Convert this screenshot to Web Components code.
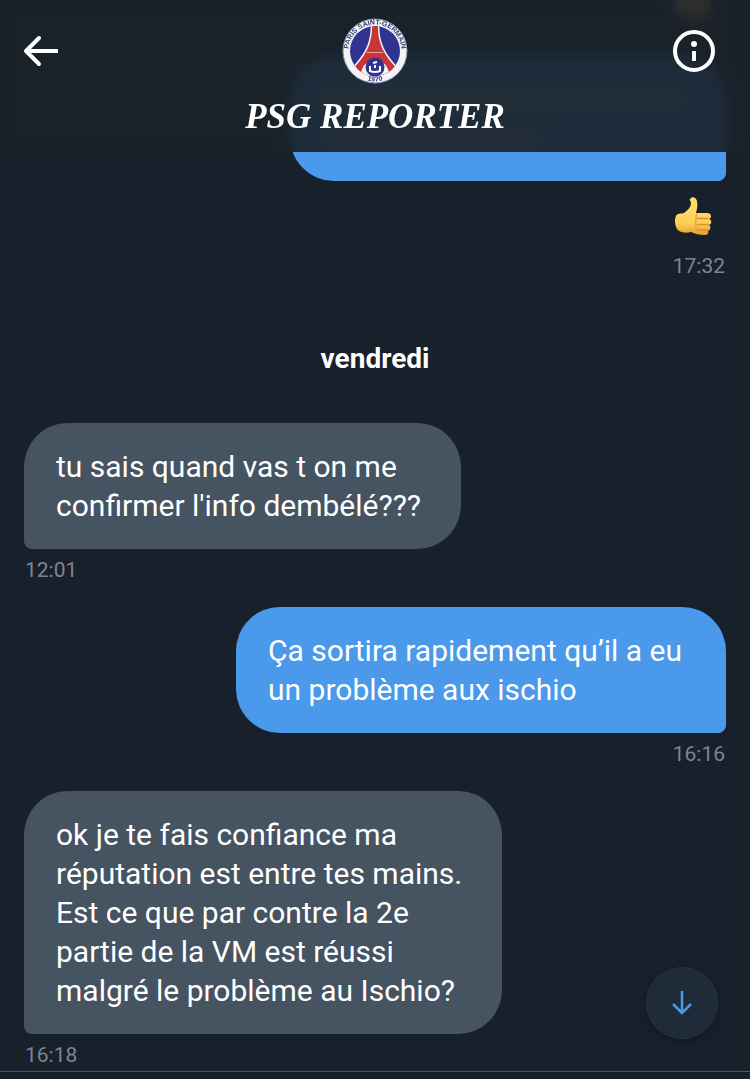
<!DOCTYPE html>
<html lang="fr">
<head>
<meta charset="UTF-8">
<meta name="viewport" content="width=device-width, initial-scale=1">
<title>PSG REPORTER</title>
<style>
    body {
        margin: 0;
        background: #18202b;
        color: #fff;
        font-family: "Roboto", "Liberation Sans", sans-serif;
    }
</style>
</head>
<body>

<chat-screen>
    <chat-header slot="header" name="PSG REPORTER">
        <club-crest></club-crest>
    </chat-header>

    <chat-message side="sent" class="reaction-only"><span slot="reaction"><thumb-emoji></thumb-emoji></span></chat-message>
    <chat-message side="sent" time="17:32" class="covered"><span slot="reaction"><thumb-emoji></thumb-emoji></span></chat-message>
    <chat-day>vendredi</chat-day>
    <chat-message side="received" time="12:01">tu sais quand vas t on me<br>confirmer l'info dembélé???</chat-message>
    <chat-message side="sent" time="16:16">Ça sortira rapidement qu’il a eu<br>un problème aux ischio</chat-message>
    <chat-message side="received" time="16:18">ok je te fais confiance ma<br>réputation est entre tes mains.<br>Est ce que par contre la 2e<br>partie de la VM est réussi<br>malgré le problème au Ischio?</chat-message>

    <scroll-down slot="floating"></scroll-down>
</chat-screen>

<script>
class ChatScreen extends HTMLElement {
    constructor(){
        super();
        const shadow = this.attachShadow({ mode: 'open' });
        shadow.innerHTML = `
        <style>
            :host{
                display: grid;
                grid-template-rows: minmax(0, 1fr) auto;
                height: 100vh;
                overflow: hidden;
            }
            /* the header covers the top of the list, so they share one cell */
            header, main, aside{
                grid-area: 1 / 1;
            }
            header{
                z-index: 1;
                align-self: start;
            }
            main{
                display: flex;
                flex-direction: column;
                justify-content: flex-end;
                gap: 24px;
                min-height: 0;
                padding: 0 24px 3px;
            }
            aside{
                z-index: 1;
                place-self: end;
                padding: 32px;
            }
            footer{
                height: 7px;
                border-top: 1px solid #4a5563;
            }
        </style>

        <header><slot name="header"></slot></header>
        <main><slot></slot></main>
        <aside><slot name="floating"></slot></aside>
        <footer></footer>
        `;
    }
}

class ChatHeader extends HTMLElement {
    constructor(){
        super();
        const shadow = this.attachShadow({ mode: 'open' });
        shadow.innerHTML = `
        <style>
            :host{
                display: grid;
                grid-template-columns: 1fr auto 1fr;
                row-gap: 13px;
                box-sizing: border-box;
                min-height: 152px;
                padding: 18px 20px 15px;
                background: rgba(25, 33, 41, 0.91);
                backdrop-filter: blur(8px);
            }
            button{
                display: flex;
                align-self: center;
                padding: 0;
                border: 0;
                background: none;
                color: inherit;
            }
            .info{
                justify-self: end;
                padding-right: 12px;
            }
            h1{
                grid-column: 1 / -1;
                justify-self: center;
                margin: 0;
                font: italic bold 35px/40px "Liberation Serif", serif;
            }
        </style>

        <button class="back" aria-label="Retour">
            <svg width="42" height="42" viewBox="0 0 42 42" fill="none" stroke="currentColor" stroke-width="4">
                <path d="M38 21H6"/>
                <path d="M19 8L6 21L19 34" stroke-linecap="round" stroke-linejoin="round"/>
            </svg>
        </button>
        <slot></slot>
        <button class="info" aria-label="Informations">
            <svg width="48" height="48" viewBox="0 0 48 48">
                <circle cx="24" cy="24" r="19" fill="none" stroke="currentColor" stroke-width="4"/>
                <circle cx="24" cy="17" r="3" fill="currentColor"/>
                <path d="M22 24h4v10h-4z" fill="currentColor"/>
            </svg>
        </button>
        <h1></h1>
        `;
    }

    connectedCallback(){
        this.shadowRoot.querySelector("h1").textContent = this.getAttribute("name");
    }
}

class ClubCrest extends HTMLElement {
    constructor(){
        super();
        const shadow = this.attachShadow({ mode: 'open' });
        shadow.innerHTML = `
        <style>
            :host{
                display: block;
            }
            svg{
                display: block;
            }
            text{
                font: bold 7px "Liberation Sans", sans-serif;
                fill: #34376f;
            }
        </style>

        <svg width="66" height="66" viewBox="0 0 66 66">
            <defs>
                <clipPath id="disc"><circle cx="33" cy="33" r="25"/></clipPath>
                <path id="top" d="M14 51.500A26.500 26.500 0 1 1 52 51.500"/>
                <path id="bottom" d="M18 59.500A31 31 0 0 0 48 59.500"/>
            </defs>
            <circle cx="33" cy="33" r="32" fill="#f4f4f8" stroke="#8f96a8" stroke-width="1"/>
            <circle cx="33" cy="33" r="25" fill="#2f3490"/>
            <g clip-path="url(#disc)">
                <path d="M29.500 6h7c0 17 4 28 17 42l-7 12H19.500l-7-12C25.500 34 29.500 23 29.500 6z" fill="#c93434" stroke="#f4f4f8" stroke-width="1.500"/>
                <path d="M25 34.500h16" stroke="#e7a0a5" stroke-width="1"/>
                <path d="M18 62c0-27 30-27 30 0z" fill="#f4f4f8"/>
            </g>
            <circle cx="33" cy="49" r="9.500" fill="#2f3490"/>
            <path d="M28 48v5q5 2 10 0v-5M33 50v-3M31 45l4-1" fill="none" stroke="#fff" stroke-width="2"/>
            <text><textPath href="#top" startOffset="50%" text-anchor="middle">PARIS SAINT-GERMAIN</textPath></text>
            <text><textPath href="#bottom" startOffset="50%" text-anchor="middle">1970</textPath></text>
        </svg>
        `;
    }
}

class ThumbEmoji extends HTMLElement {
    constructor(){
        super();
        const shadow = this.attachShadow({ mode: 'open' });
        shadow.innerHTML = `
        <style>
            :host{
                display: block;
            }
            svg{
                display: block;
            }
        </style>

        <svg width="38" height="40" viewBox="0 0 38 40" role="img" aria-label="Pouce levé">
            <defs>
                <linearGradient id="skin" x1="0" y1="0" x2="0" y2="1">
                    <stop offset="0" stop-color="#ffe06a"/>
                    <stop offset="0.700" stop-color="#fccf58"/>
                    <stop offset="1" stop-color="#e59c28"/>
                </linearGradient>
            </defs>
            <path d="M16 3c2-3 6-2 7 2 1 4 0 8-1 12h11c5 0 5 5 2 6 3 1 3 5 0 6 2 1 2 5-1 6 1 3-1 4-4 4-5 0-9-1-13-3-4 1-8 1-12-1-4-2-5-12-3-15 1-3 5-2 8-3 4-3 7-6 7-10 0-2-2-3-1-4z" fill="url(#skin)"/>
            <path d="M23 22.500h11M23 28.500h12M24 34h10" stroke="#d9942b" stroke-width="1.500" stroke-linecap="round"/>
            <path d="M23 18c-2 5-2 13 0 18" fill="none" stroke="#e8ab37" stroke-width="1.500"/>
        </svg>
        `;
    }
}

class ChatDay extends HTMLElement {
    constructor(){
        super();
        const shadow = this.attachShadow({ mode: 'open' });
        shadow.innerHTML = `
        <style>
            :host{
                display: block;
                margin: 40px 0 24px;
                font-size: 28px;
                font-weight: 700;
                line-height: 32px;
                text-align: center;
            }
        </style>
        <slot></slot>
        `;
    }
}

class ChatMessage extends HTMLElement {
    constructor(){
        super();
        const shadow = this.attachShadow({ mode: 'open' });
        shadow.innerHTML = `
        <style>
            :host{
                display: flex;
                flex-direction: column;
                flex-shrink: 0;
                align-items: flex-start;
            }
            :host([side="sent"]){
                align-items: flex-end;
            }
            .bubble{
                box-sizing: border-box;
                min-width: 436px;
                min-height: 126px;
                padding: 24px 40px 24px 32px;
                border-radius: 44px 44px 44px 8px;
                background: #465361;
                font-size: 30px;
                line-height: 39px;
            }
            :host([side="sent"]) .bubble{
                padding-right: 44px;
                border-radius: 44px 44px 8px 44px;
                background: #4a99ea;
            }
            /* two pale lines that show through the header */
            :host(.covered) .bubble::before, :host(.covered) .bubble::after{
                content: "";
                display: block;
                width: 100%;
                height: 15px;
                margin: 12px 0;
                background: rgba(255, 190, 150, 0.4);
            }
            :host(.covered) .bubble::after{
                width: 60%;
                margin-top: 24px;
            }
            :host(.reaction-only) .bubble, :host(.reaction-only) time{
                display: none;
            }
            ::slotted([slot="reaction"]){
                display: block;
                padding: 15px 14px 9px;
            }
            time{
                margin-top: 8px;
                padding: 0 1px;
                color: #7d8593;
                font-size: 21px;
                line-height: 26px;
            }
        </style>

        <div class="bubble"><slot></slot></div>
        <slot name="reaction"></slot>
        <time></time>
        `;
    }

    connectedCallback(){
        this.shadowRoot.querySelector("time").textContent = this.getAttribute("time") || "";
    }
}

class ScrollDown extends HTMLElement {
    constructor(){
        super();
        const shadow = this.attachShadow({ mode: 'open' });
        shadow.innerHTML = `
        <style>
            :host{
                display: block;
            }
            button{
                display: grid;
                place-items: center;
                width: 72px;
                height: 72px;
                padding: 0;
                border: 1px solid #283442;
                border-radius: 50%;
                background: #202b39;
                box-shadow: 0 2px 8px rgba(0, 0, 0, 0.3);
                color: #4a99ea;
            }
        </style>

        <button aria-label="Aller en bas">
            <svg width="24" height="28" viewBox="0 0 24 28" fill="none" stroke="currentColor" stroke-width="2.500">
                <path d="M12 2V24M3 15L12 24L21 15"/>
            </svg>
        </button>
        `;
    }

    connectedCallback(){
        const btn = this.shadowRoot.querySelector("button");
        btn.addEventListener("click", () => {
            document.querySelector("chat-message:last-of-type").scrollIntoView();
        });
    }
}

customElements.define("chat-screen", ChatScreen);
customElements.define("chat-header", ChatHeader);
customElements.define("club-crest", ClubCrest);
customElements.define("thumb-emoji", ThumbEmoji);
customElements.define("chat-day", ChatDay);
customElements.define("chat-message", ChatMessage);
customElements.define("scroll-down", ScrollDown);
</script>
</body>
</html>
